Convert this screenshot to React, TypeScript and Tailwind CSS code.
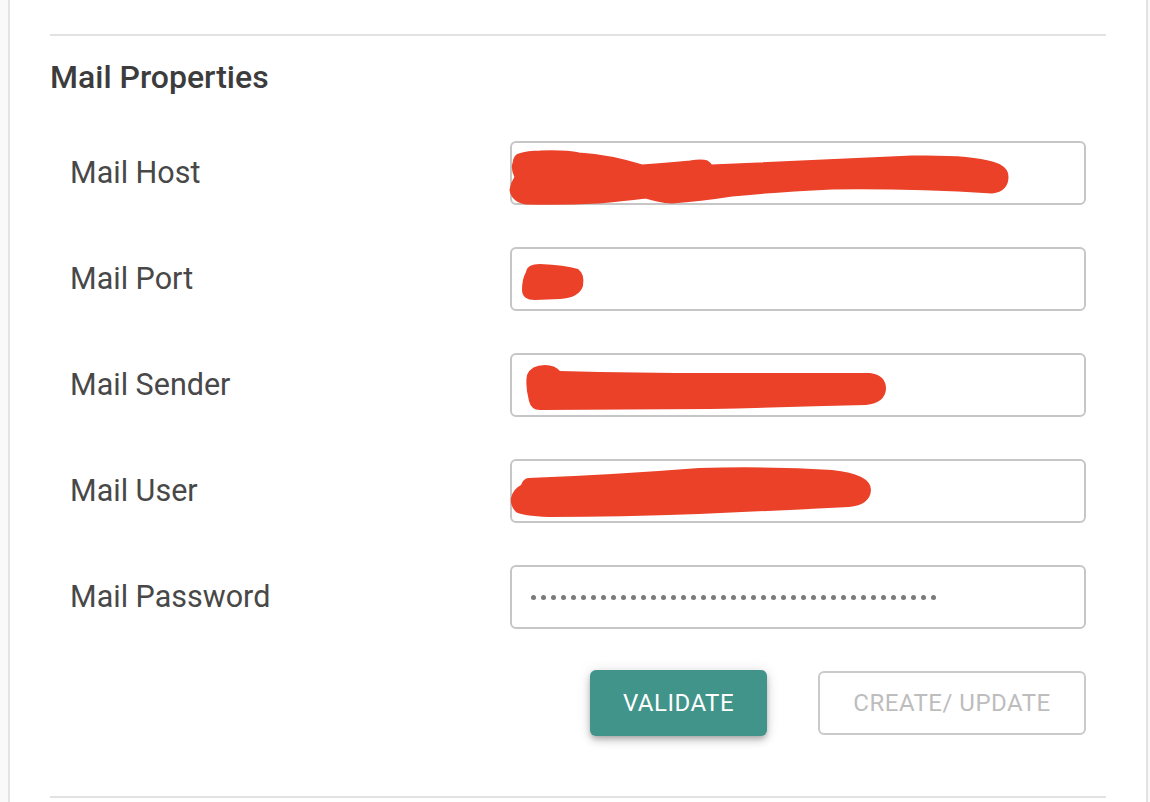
import { FC, ReactNode } from 'react';

type FieldT = {
  label: string;
  scribble?: ReactNode;
  password?: boolean;
};

const RED = '#ea4128';

// redaction marks drawn over the inputs (coords relative to the input box)
const HostMark = () => (
  <path
    d="M 1 49 Q 2 42 6 36 Q 2 28 4 22 Q 5 15 9 14 Q 18 11 30 11 Q 55 10 69 13 Q 100 15 132 25 Q 160 23 180 21 Q 192 19 197 21 Q 200 23 201 25 Q 300 21 402 16 Q 460 15 482 22 Q 497 26 497 36 Q 497 49 482 51 Q 400 46 322 47 Q 260 50 222 54 Q 190 59 162 61 Q 148 60 136 56 Q 110 59 89 61 Q 50 63 16 62 Q 3 60 1 49 Z"
    fill={RED}
    stroke={RED}
    strokeWidth={3}
    strokeLinejoin="round"
  />
);

const PortMark = () => (
  <path
    d="M 16 25 Q 17 17 30 17 Q 55 18 68 22 Q 75 27 73 39 Q 69 51 50 52 L 25 53 Q 12 53 12 43 Q 12 32 16 25 Z"
    fill={RED}
  />
);

const SenderMark = () => (
  <path
    d="M 17 22 Q 21 12 35 12 Q 45 12 50 18 Q 130 20 200 20 L 360 20 Q 376 22 376 36 Q 375 50 356 52 Q 280 54 200 56 L 30 57 Q 21 57 19 48 Q 15 33 17 22 Z"
    fill={RED}
  />
);

const UserMark = () => (
  <path
    d="M 1 39 Q 3 30 11 26 Q 13 20 18 19 Q 100 16 189 9 Q 260 7 322 11 Q 361 15 361 31 Q 360 46 339 48 Q 260 52 189 55 Q 110 58 39 58 Q 12 57 6 53 Q 0 47 1 39 Z"
    fill={RED}
  />
);

const fields: FieldT[] = [
  { label: 'Mail Host', scribble: <HostMark /> },
  { label: 'Mail Port', scribble: <PortMark /> },
  { label: 'Mail Sender', scribble: <SenderMark /> },
  { label: 'Mail User', scribble: <UserMark /> },
  { label: 'Mail Password', password: true },
];

const FieldRow: FC<{ field: FieldT }> = ({ field }) => {
  return (
    <div className="flex items-center justify-between px-[20px]">
      <span className="text-[30.5px] text-[#484848]">{field.label}</span>
      <div className="relative w-[576px] h-[64px] rounded-[6px] border-2 border-[#c6c6c6] bg-white flex items-center pl-[19px]">
        {field.password && (
          <div className="flex gap-[5px]">
            {Array.from({ length: 41 }).map((_, i) => (
              <span key={i} className="w-[5px] h-[5px] rounded-full bg-[#7a7a7a]" />
            ))}
          </div>
        )}
        {field.scribble && (
          <svg
            className="absolute left-[-2px] top-[-2px] overflow-visible"
            width="576"
            height="64"
            viewBox="0 0 576 64"
          >
            {field.scribble}
          </svg>
        )}
      </div>
    </div>
  );
};

const App = () => {
  return (
    <div className="h-screen bg-[#f9f9f9] px-[2px] overflow-hidden" style={{ fontFamily: 'Roboto, "Liberation Sans", sans-serif' }}>
      <div className="h-full ml-[6px] mr-0 bg-white border-x-2 border-[#e3e3e3] px-[40px] pt-[34px]">
        <div className="border-t-2 border-[#e2e2e2]" />

        <h2 className="mt-[22px] text-[32px] leading-[38px] font-medium text-[#3c3c3c]">Mail Properties</h2>

        <div className="mt-[45px] flex flex-col gap-[42px]">
          {fields.map((f) => (
            <FieldRow key={f.label} field={f} />
          ))}
        </div>

        {/* actions */}
        <div className="mt-[41px] flex justify-end items-center gap-[51px] px-[20px]">
          <button className="w-[177px] h-[66px] rounded-[6px] bg-[#41948a] text-white text-[24px] tracking-[0.5px] uppercase shadow-[0_3px_5px_-1px_rgba(0,0,0,0.2),0_5px_8px_0_rgba(0,0,0,0.14),0_1px_14px_0_rgba(0,0,0,0.12)]">
            Validate
          </button>
          <button className="w-[268px] h-[64px] rounded-[6px] border-2 border-[#cacaca] bg-white text-[#bdbdbd] text-[24px] tracking-[0.5px] uppercase">
            Create/ Update
          </button>
        </div>

        <div className="mt-[60px] border-t-2 border-[#e2e2e2]" />
      </div>
    </div>
  );
};

export default App;
